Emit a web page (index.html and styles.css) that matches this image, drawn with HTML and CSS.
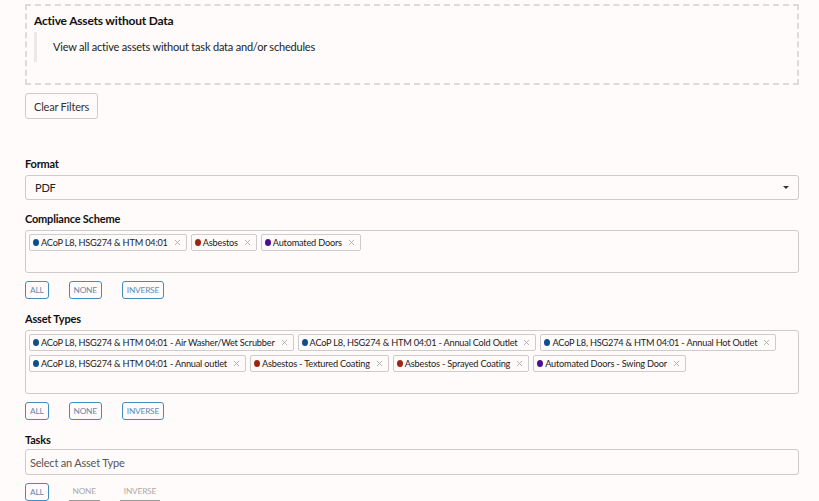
FILE: index.html
```html
<!DOCTYPE html>
<html lang="en">
<head>
    <meta charset="UTF-8">
    <title>Active Assets without Data</title>
    <link rel="stylesheet" href="styles.css">
</head>

<body>
    <div class="container">
        <div class="report-info">
            <h4>Active Assets without Data</h4>
            <blockquote>View all active assets without task data and/or schedules</blockquote>
        </div>

        <button type="button" class="button">Clear Filters</button>

        <form id="reportForm">
            <div class="form-group">
                <label for="format">Format</label>
                <div class="select">
                    <span>PDF</span>
                    <span class="caret"></span>
                </div>
            </div>

            <div class="form-group">
                <label>Compliance Scheme</label>
                <div class="multi short">
                    <span class="chip"><i class="dot blue"></i>ACoP L8, HSG274 &amp; HTM 04:01<svg class="remove" viewBox="0 0 8 8"><path d="M1 1L7 7M7 1L1 7"/></svg></span>
                    <span class="chip"><i class="dot red"></i>Asbestos<svg class="remove" viewBox="0 0 8 8"><path d="M1 1L7 7M7 1L1 7"/></svg></span>
                    <span class="chip"><i class="dot purple"></i>Automated Doors<svg class="remove" viewBox="0 0 8 8"><path d="M1 1L7 7M7 1L1 7"/></svg></span>
                </div>
                <div class="actions">
                    <a class="mini">ALL</a>
                    <a class="mini">NONE</a>
                    <a class="mini">INVERSE</a>
                </div>
            </div>

            <div class="form-group">
                <label>Asset Types</label>
                <div class="multi tall">
                    <span class="chip"><i class="dot blue"></i>ACoP L8, HSG274 &amp; HTM 04:01 - Air Washer/Wet Scrubber<svg class="remove" viewBox="0 0 8 8"><path d="M1 1L7 7M7 1L1 7"/></svg></span>
                    <span class="chip"><i class="dot blue"></i>ACoP L8, HSG274 &amp; HTM 04:01 - Annual Cold Outlet<svg class="remove" viewBox="0 0 8 8"><path d="M1 1L7 7M7 1L1 7"/></svg></span>
                    <span class="chip"><i class="dot blue"></i>ACoP L8, HSG274 &amp; HTM 04:01 - Annual Hot Outlet<svg class="remove" viewBox="0 0 8 8"><path d="M1 1L7 7M7 1L1 7"/></svg></span>
                    <span class="chip"><i class="dot blue"></i>ACoP L8, HSG274 &amp; HTM 04:01 - Annual outlet<svg class="remove" viewBox="0 0 8 8"><path d="M1 1L7 7M7 1L1 7"/></svg></span>
                    <span class="chip"><i class="dot red"></i>Asbestos - Textured Coating<svg class="remove" viewBox="0 0 8 8"><path d="M1 1L7 7M7 1L1 7"/></svg></span>
                    <span class="chip"><i class="dot red"></i>Asbestos - Sprayed Coating<svg class="remove" viewBox="0 0 8 8"><path d="M1 1L7 7M7 1L1 7"/></svg></span>
                    <span class="chip"><i class="dot purple"></i>Automated Doors - Swing Door<svg class="remove" viewBox="0 0 8 8"><path d="M1 1L7 7M7 1L1 7"/></svg></span>
                </div>
                <div class="actions">
                    <a class="mini">ALL</a>
                    <a class="mini">NONE</a>
                    <a class="mini">INVERSE</a>
                </div>
            </div>

            <div class="form-group">
                <label>Tasks</label>
                <div class="select placeholder">Select an Asset Type</div>
                <div class="actions">
                    <a class="mini">ALL</a>
                    <a class="mini disabled">NONE</a>
                    <a class="mini disabled">INVERSE</a>
                </div>
            </div>
        </form>
    </div>
</body>
</html>
```

FILE: styles.css
```css
body {
    margin: 0;
    background-color: #fffbfa;
    font-family: Lato, "Open Sans", sans-serif;
    font-size: 11px;
    letter-spacing: -0.2px;
    color: #222;
}

.container {
    width: 774px;
    padding: 4px 0 0 25px;
}

.report-info {
    border: 2px dashed #dedad9;
    padding: 7px 8px 0 7px;
    box-sizing: border-box;
    height: 81px;
}

h4 {
    margin: 0;
    font-size: 12px;
    line-height: 16px;
    font-weight: bold;
    color: #111;
}

blockquote {
    margin: 3px 0 0 0;
    border-left: 3px solid #ebe8e7;
    padding: 8px 0 8px 16px;
    font-size: 11px;
    line-height: 14px;
}

.button {
    margin-top: 8px;
    height: 26px;
    padding: 0 8px;
    background-color: #fffbfa;
    border: 1px solid #ccc;
    border-radius: 3px;
    font-family: inherit;
    font-size: 11px;
    letter-spacing: -0.2px;
    color: #333;
}

form {
    margin-top: 38px;
}

.form-group {
    margin-bottom: 12px;
}

label {
    display: block;
    font-weight: bold;
    font-size: 11px;
    line-height: 14px;
    margin-bottom: 4px;
    color: #111;
}

.select {
    height: 25px;
    border: 1px solid #ccc;
    border-radius: 3px;
    box-sizing: border-box;
    display: flex;
    align-items: center;
    justify-content: space-between;
    padding: 0 9px;
}

.select.placeholder {
    height: 26px;
    margin-top: -2px;
    padding-left: 4px;
    color: #555;
}

.caret {
    width: 0;
    height: 0;
    border-left: 3px solid transparent;
    border-right: 3px solid transparent;
    border-top: 3px solid #333;
}

.multi {
    border: 1px solid #ccc;
    border-radius: 3px;
    box-sizing: border-box;
    padding: 3px 3px;
    display: flex;
    flex-wrap: wrap;
    align-content: flex-start;
    gap: 4px 4px;
}

.multi.short {
    height: 43px;
}

.multi.tall {
    height: 64px;
}

.chip {
    display: inline-flex;
    align-items: center;
    height: 17px;
    box-sizing: border-box;
    border: 1px solid #ccc;
    border-radius: 2px;
    padding: 0 5px 0 3px;
    font-size: 9.2px;
    color: #222;
}

.remove {
    width: 7px;
    height: 7px;
    margin-left: 6px;
    fill: none;
    stroke: #aaa;
    stroke-width: 1;
}

.dot {
    display: inline-block;
    width: 6px;
    height: 7px;
    border-radius: 50%;
    margin-right: 2px;
}

.dot.blue {
    background-color: #0d4f8b;
}

.dot.red {
    background-color: #9b2413;
}

.dot.purple {
    background-color: #4b0f8f;
}

.actions {
    display: flex;
    gap: 20px;
    margin-top: 8px;
    padding-bottom: 1px;
}

.mini {
    display: inline-block;
    height: 18px;
    line-height: 16px;
    box-sizing: border-box;
    padding: 0 4px;
    border: 1px solid #3d8ec4;
    border-radius: 3px;
    font-size: 8.3px;
    color: #6289b0;
}

.mini.disabled {
    border: none;
    border-bottom: 1px solid #999;
    border-radius: 0;
    color: #aaa;
}
```
